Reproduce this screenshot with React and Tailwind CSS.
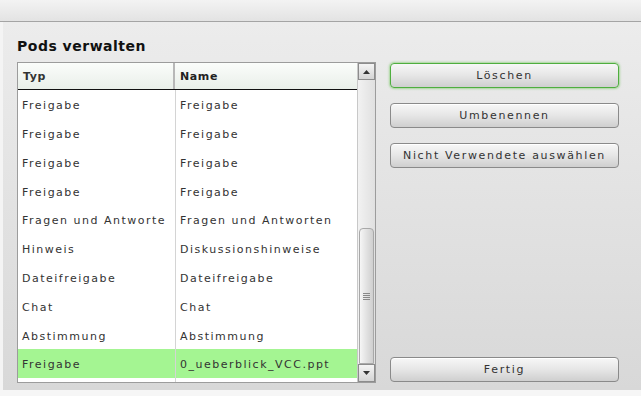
import React from "react";

const rows = [
  ["Freigabe", "Freigabe"],
  ["Freigabe", "Freigabe"],
  ["Freigabe", "Freigabe"],
  ["Freigabe", "Freigabe"],
  ["Fragen und Antworte", "Fragen und Antworten"],
  ["Hinweis", "Diskussionshinweise"],
  ["Dateifreigabe", "Dateifreigabe"],
  ["Chat", "Chat"],
  ["Abstimmung", "Abstimmung"],
  ["Freigabe", "0_ueberblick_VCC.ppt"],
];

function Btn({ children, green }) {
  return (
    <div
      className={
        "h-[25px] w-[229px] rounded-[4px] flex items-center justify-center pt-[1px] text-[11px] tracking-[1.65px] text-[#333] bg-gradient-to-b from-[#f7f7f7] via-[#e6e6e6] to-[#cfcfcf] " +
        (green
          ? "border border-[#4fae3f] shadow-[0_0_2px_1px_rgba(120,200,100,0.6)]"
          : "border border-[#8a8a8a] shadow-[inset_0_1px_0_#ffffff]")
      }
    >
      {children}
    </div>
  );
}

export default function App() {
  return (
    <div
      className="w-[641px] h-[396px] bg-[#f6f6f6] flex flex-col overflow-hidden"
      style={{ fontFamily: '"DejaVu Sans", Verdana, sans-serif' }}
    >
      <div className="h-[22px] shrink-0 bg-gradient-to-b from-[#f3f3f3] to-[#e3e3e3] border-b border-[#a4a4a4]" />
      <div className="h-[368px] shrink-0 bg-gradient-to-b from-[#ececec] to-[#d8d8d8] border-l-[3px] border-l-[#f4f4f4] pl-[14px] pt-[15px] flex flex-col">
        <div className="text-[14px] leading-[18px] font-bold tracking-[0.5px] text-[#111] mb-[7px]">
          Pods verwalten
        </div>
        <div className="flex">
          <div className="w-[359px] h-[321px] border border-[#9c9c9c] bg-white flex">
            <div className="w-[339px] flex flex-col">
              <div className="h-[27px] shrink-0 flex pt-[3px] bg-gradient-to-b from-[#fbfdfb] to-[#e9efe9] border-b border-[#111] text-[11px] font-bold text-[#333] tracking-[0.6px]">
                <div className="w-[157px] border-r-2 border-[#b8b8b8] -mt-[3px] pt-[3px] flex items-center pl-[5px]">Typ</div>
                <div className="flex-1 flex items-center pl-[5px] text-[#222]" style={{ fontWeight: 600 }}>Name</div>
              </div>
              <div className="flex-1 relative">
                <div className="absolute left-[157px] top-0 bottom-0 w-px bg-[#d4d4d4]" />
                {rows.map((r, i) => (
                  <div
                    key={i}
                    className={
                      "h-[28.8px] flex items-center pt-[4px] text-[11px] tracking-[1.5px] text-[#333] " +
                      (i === rows.length - 1 ? "bg-[#a4f592]" : "")
                    }
                  >
                    <div className="w-[158px] pl-[4px] whitespace-nowrap overflow-hidden">{r[0]}</div>
                    <div className="flex-1 pl-[4px] whitespace-nowrap">{r[1]}</div>
                  </div>
                ))}
              </div>
            </div>
            <div className="w-[18px] flex flex-col bg-gradient-to-r from-[#f2f2f2] to-[#e0e0e0] border-l border-[#c8c8c8]">
              <div className="h-[17px] shrink-0 border border-[#8c8c8c] bg-gradient-to-b from-[#f4f4f4] to-[#d4d4d4] flex items-center justify-center">
                <svg width="7" height="4" viewBox="0 0 7 4"><path d="M0 4 L3.5 0 L7 4 Z" fill="#333" /></svg>
              </div>
              <div className="flex-1 flex flex-col pt-[148px]">
                <div className="flex-1 mx-[1px] rounded-t-[4px] border border-[#a8a8a8] bg-gradient-to-r from-[#f6f6f6] via-[#e2e2e2] to-[#cfcfcf] flex flex-col items-center justify-center gap-[1px]">
                  <div className="w-[7px] h-px bg-[#888]" />
                  <div className="w-[7px] h-px bg-[#888]" />
                  <div className="w-[7px] h-px bg-[#888]" />
                  <div className="w-[7px] h-px bg-[#888]" />
                </div>
              </div>
              <div className="h-[18px] shrink-0 border border-[#8c8c8c] bg-gradient-to-b from-[#f4f4f4] to-[#d4d4d4] flex items-center justify-center">
                <svg width="7" height="4" viewBox="0 0 7 4"><path d="M0 0 L3.5 4 L7 0 Z" fill="#333" /></svg>
              </div>
            </div>
          </div>
          <div className="ml-[14px] h-[321px] flex flex-col pt-[1px] pb-[1px]">
            <div className="flex flex-col gap-[15px]">
              <Btn green>Löschen</Btn>
              <Btn>Umbenennen</Btn>
              <Btn>Nicht Verwendete auswählen</Btn>
            </div>
            <div className="mt-auto">
              <Btn>Fertig</Btn>
            </div>
          </div>
        </div>
      </div>
    </div>
  );
}
